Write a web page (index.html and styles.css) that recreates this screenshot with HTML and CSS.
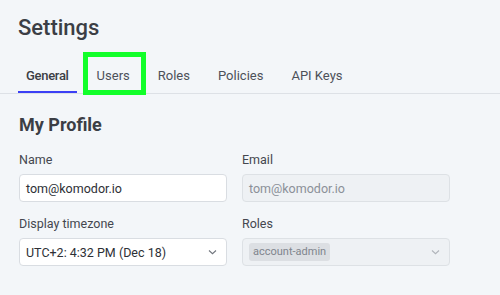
FILE: index.html
```html
<!DOCTYPE html>
<html lang="en">
<head>
  <meta charset="UTF-8">
  <meta name="viewport" content="width=device-width, initial-scale=1.0">
  <title>Settings</title>
  <link rel="stylesheet" href="styles.css">
</head>
<body>
  <!-- Page header -->
  <h1 class="page-title">Settings</h1>

  <!-- Tabs -->
  <nav class="tabs">
    <a class="tab active">General</a>
    <a class="tab">Users</a>
    <a class="tab">Roles</a>
    <a class="tab">Policies</a>
    <a class="tab">API Keys</a>
    <span class="highlight"></span>
  </nav>

  <!-- Profile form -->
  <section class="profile">
    <h2>My Profile</h2>
    <div class="form-grid">
      <div class="field">
        <label>Name</label>
        <div class="input">tom@komodor.io</div>
      </div>
      <div class="field">
        <label>Email</label>
        <div class="input disabled">tom@komodor.io</div>
      </div>
      <div class="field">
        <label>Display timezone</label>
        <div class="input select">
          <span>UTC+2: 4:32 PM (Dec 18)</span>
          <svg class="chevron" width="9" height="6" viewBox="0 0 9 6"><path d="M1 1.5l3.5 3.2 3.5-3.2" fill="none" stroke="#70757d" stroke-width="1.1"/></svg>
        </div>
      </div>
      <div class="field">
        <label>Roles</label>
        <div class="input select disabled">
          <span class="chip">account-admin</span>
          <svg class="chevron" width="9" height="6" viewBox="0 0 9 6"><path d="M1 1.5l3.5 3.2 3.5-3.2" fill="none" stroke="#b0b4ba" stroke-width="1.1"/></svg>
        </div>
      </div>
    </div>
  </section>
</body>
</html>
```

FILE: styles.css
```css
* {
  margin: 0;
  padding: 0;
  box-sizing: border-box;
}
body {
  font-family: Roboto, "Liberation Sans", sans-serif;
  background: #f3f6f9;
  color: #3b3e45;
  width: 500px;
  height: 295px;
  overflow: hidden;
}
.page-title {
  font-size: 22px;
  font-weight: 500;
  line-height: 26px;
  margin: 15px 0 0 18px;
  color: #3b3e45;
}
/* Tabs */
.tabs {
  position: relative;
  display: flex;
  gap: 12px;
  margin-top: 19px;
  padding-left: 18px;
  border-bottom: 1px solid #dde1e6;
}
.tab {
  font-size: 13px;
  line-height: 16px;
  padding: 8px 8px 7px;
  color: #4d5159;
  border-bottom: 2px solid transparent;
}
.tab.active {
  font-weight: 500;
  letter-spacing: -0.3px;
  color: #3b3e45;
  border-bottom-color: #3b3ff5;
}
.highlight {
  position: absolute;
  left: 83px;
  top: -8px;
  width: 63px;
  height: 43px;
  border: 5px solid #12ff2a;
}
/* Profile */
.profile {
  padding: 20px 19px 0;
}
.profile h2 {
  font-size: 18px;
  font-weight: 700;
  line-height: 22px;
  margin-bottom: 16px;
}
.form-grid {
  display: grid;
  grid-template-columns: 208px 208px;
  column-gap: 15px;
  row-gap: 14px;
}
.field label {
  display: block;
  font-size: 12.5px;
  line-height: 16px;
  margin-bottom: 6px;
  color: #44474f;
}
.input {
  height: 28px;
  display: flex;
  align-items: center;
  padding: 0 6px;
  font-size: 12.5px;
  color: #2d3036;
  background: #fff;
  border: 1px solid #d9dde2;
  border-radius: 4px;
}
.input.disabled {
  background: #eef1f4;
  color: #8b9098;
  border-color: #dde1e5;
}
.select {
  justify-content: space-between;
  padding-right: 9px;
}
.chip {
  font-size: 11px;
  line-height: 18px;
  padding: 0 4px;
  background: #dcdfe3;
  color: #80858d;
  border-radius: 3px;
}
```
